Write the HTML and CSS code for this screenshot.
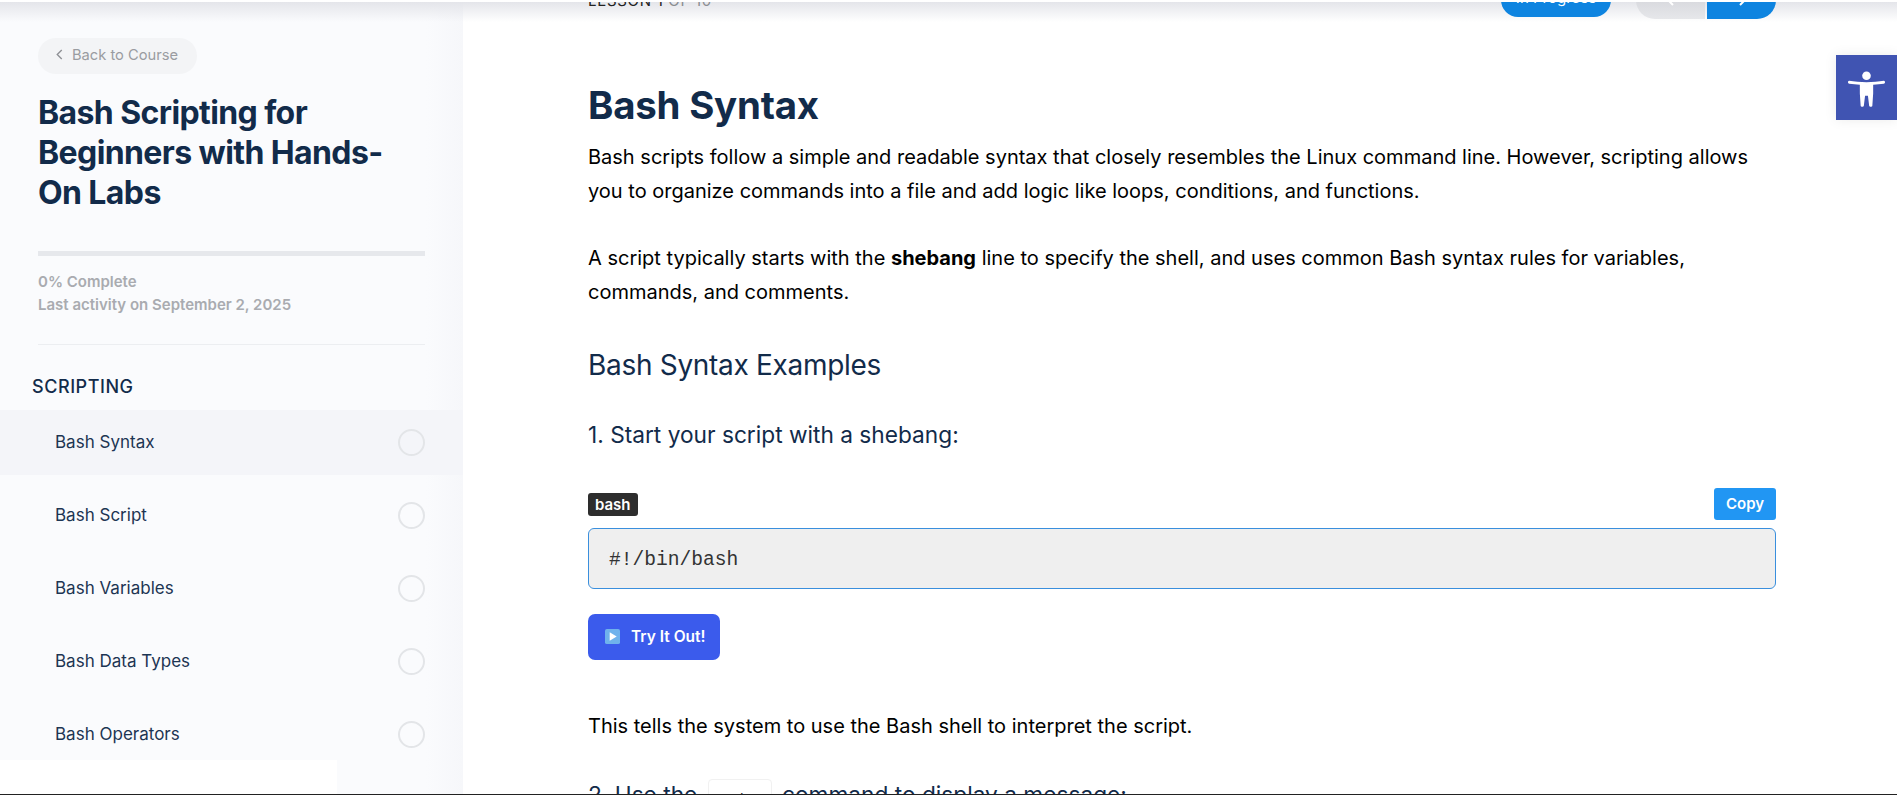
FILE: index.html
```html
<!DOCTYPE html>
<html lang="en">
<head>
<meta charset="utf-8">
<title>Bash Syntax</title>
<link rel="stylesheet" href="styles.css">
</head>
<body>
<div class="page">
  <aside class="sidebar">
    <a class="back"><svg class="back-icon" viewBox="0 0 10 14"><path d="M7.500 2 2.500 7l5 5"/></svg>Back to Course</a>
    <h2 class="course-title">Bash Scripting for Beginners with Hands-On Labs</h2>
    <div class="progress"></div>
    <p class="meta">0% Complete<br>Last activity on September 2, 2025</p>
    <hr class="divider">
    <h3 class="section">SCRIPTING</h3>
    <ul class="lessons">
      <li class="lesson active"><span>Bash Syntax</span><i class="check"></i></li>
      <li class="lesson"><span>Bash Script</span><i class="check"></i></li>
      <li class="lesson"><span>Bash Variables</span><i class="check"></i></li>
      <li class="lesson"><span>Bash Data Types</span><i class="check"></i></li>
      <li class="lesson"><span>Bash Operators</span><i class="check"></i></li>
    </ul>
  </aside>
  <main class="main">
    <header class="topbar">
      <span class="count">LESSON 1 <em>OF 10</em></span>
      <div class="top-actions">
        <span class="status">In Progress</span>
        <div class="nav">
          <a class="nav-btn prev"><svg viewBox="0 0 10 14"><path d="M7 2 2 7l5 5"/></svg></a>
          <a class="nav-btn next"><svg viewBox="0 0 10 14"><path d="m3 2 5 5-5 5"/></svg></a>
        </div>
      </div>
    </header>
    <article class="article">
      <h1>Bash Syntax</h1>
      <p>Bash scripts follow a simple and readable syntax that closely resembles the Linux command line. However, scripting allows you to organize commands into a file and add logic like loops, conditions, and functions.</p>
      <p class="gap">A script typically starts with the <strong>shebang</strong> line to specify the shell, and uses common Bash syntax rules for variables, commands, and comments.</p>
      <h2>Bash Syntax Examples</h2>
      <h3>1. Start your script with a shebang:</h3>
      <div class="code-head"><span class="lang">bash</span><button class="copy">Copy</button></div>
      <pre class="code">#!/bin/bash</pre>
      <button class="try"><svg class="play" viewBox="0 0 16 16"><rect width="16" height="16" rx="2"/><path d="M5 3.500v9l7.500-4.500z"/></svg>Try It Out!</button>
      <p class="after">This tells the system to use the Bash shell to interpret the script.</p>
      <h3 class="second">2. Use the <code class="inline">echo</code> command to display a message:</h3>
    </article>
  </main>
</div>
<div class="top-edge"></div>
<div class="corner"></div>
<div class="bottom-line"></div>
<a class="a11y"><svg viewBox="0 0 40 40"><circle cx="20" cy="8.500" r="4.200"/><path d="M3 13.500c-1.500.3-1.500 2.700.2 2.800l10.300 1v8.500l.8 12c.1 1.300 2.900 1.300 3.100 0l1.200-9.800h2.800l1.200 9.800c.2 1.300 3 1.300 3.100 0l.8-12v-8.500l10.300-1c1.700-.1 1.700-2.500.2-2.800-5 .9-11 1.300-17 1.300s-12-.4-17-1.300z"/></svg></a>
</body>
</html>
```

FILE: styles.css
```css
* { box-sizing: border-box; }
html, body { margin: 0; height: 795px; overflow: hidden; background: #fff; }
body { font-family: Inter, "Liberation Sans", sans-serif; color: #000; }
.page { display: flex; height: 795px; overflow: hidden; }

.sidebar {
  flex: 0 0 463px;
  padding: 38px 38px 0;
  background: linear-gradient(to bottom, #e4e5ea 2px, rgba(250,251,253,0) 22px), linear-gradient(to right, #fafbfd 92%, #f6f7fa 100%);
}
.back {
  display: inline-flex; align-items: center; gap: 8px;
  height: 36px; padding: 0 19px 1px 17px; border-radius: 18px;
  background: #f3f4f6; color: #9a9ca1; font-size: 14.700px; line-height: 1;
}
.back-icon { width: 9px; height: 13px; margin-top: -2px; fill: none; stroke: #8e9095; stroke-width: 1.500; }
.course-title {
  margin: 19px 0 0; width: 360px;
  color: #122b4a; font-size: 32px; line-height: 40px; font-weight: 700; letter-spacing: -0.6px;
}
.progress { height: 5px; margin-top: 38px; background: #e6e8ec; }
.meta { margin: 14px 0 0; color: #a9abb0; font-size: 15px; line-height: 23px; font-weight: 600; }
.divider { margin: 28px 0 0; border: 0; border-top: 1px solid #eceef1; }
.section {
  margin: 32px 0 0 -6px; color: #122b4a;
  font-size: 18px; line-height: 20px; font-weight: 500; letter-spacing: .55px;
}
.lessons { list-style: none; margin: 13px -38px 0; padding: 0; }
.lesson {
  display: flex; align-items: center; justify-content: space-between;
  height: 73px; padding: 0 38px 0 55px;
  color: #1d3553; font-size: 17px;
}
.lesson.active { height: 65px; background: #f4f5f9; margin-bottom: 4px; }
.lesson span { margin-top: -1px; }
.check { width: 27px; height: 27px; border: 2px solid #e3e5e8; border-radius: 50%; }

.main {
  flex: 1; padding: 0 121px 0 125px;
  background: linear-gradient(to bottom, #e4e5ea 2px, rgba(255,255,255,0) 22px);
}
.topbar {
  display: flex; justify-content: space-between; align-items: flex-end;
  height: 19px; overflow: hidden;
}
.count { position: relative; top: -9px; font-size: 15px; line-height: 18px; letter-spacing: .7px; color: #222; }
.count em { font-style: normal; color: #8b8d92; }
.top-actions { display: flex; align-items: flex-end; gap: 25px; }
.status {
  display: flex; align-items: flex-end; justify-content: center;
  width: 110px; height: 34px; margin-bottom: 2px; padding-bottom: 10px;
  border-radius: 0 0 17px 17px; background: #0e84e0; color: #fff; font-size: 15px; line-height: 18px;
}
.nav { display: flex; gap: 2px; }
.nav-btn {
  display: flex; justify-content: center; align-items: flex-end;
  width: 69px; height: 19px; padding-bottom: 12px;
}
.nav-btn svg { width: 10px; height: 14px; flex: none; fill: none; stroke: #fff; stroke-width: 2; }
.prev { background: linear-gradient(to bottom, #d8d9de, #e6e7ea); border-radius: 0 0 0 19px; }
.next { background: #0e84e0; border-radius: 0 0 19px 0; }

.article { padding-top: 64px; }
h1 { margin: 0 0 14px; color: #122b4a; font-size: 38.400px; line-height: 44px; font-weight: 700; letter-spacing: -0.2px; }
.article p { margin: 0; font-size: 20px; line-height: 33.500px; }
.article p.gap { margin-top: 34px; }
.article h2 { margin: 36px 0 0; color: #122b4a; font-size: 28px; line-height: 40px; font-weight: 400; letter-spacing: -0.3px; }
.article h3 { margin: 30px 0 0; color: #122b4a; font-size: 22.700px; line-height: 40px; font-weight: 400; }
.code-head { display: flex; justify-content: space-between; align-items: center; margin-top: 33px; height: 32px; }
.lang { padding: 0 7px; height: 23px; border-radius: 3px; background: #2d2d2d; color: #fff; font-size: 15px; line-height: 23px; font-weight: 600; }
.copy {
  width: 62px; height: 32px; padding: 0 0 2px; border: 0; border-radius: 3px;
  background: #2196f3; color: #fff; font: 600 15px Inter, sans-serif;
}
.code {
  margin: 8px 0 0; height: 61px; padding: 2px 20px 0;
  border: 1px solid #3a8fdd; border-radius: 6px; background: #efefef;
  color: #333; font: 19.600px/59px "Liberation Mono", monospace;
}
.try {
  display: flex; align-items: center; gap: 11px;
  width: 132px; height: 46px; margin-top: 25px; padding: 0 0 2px 17px;
  border: 0; border-radius: 7px; background: #3b5bec; color: #fff;
  font: 600 15.500px Inter, sans-serif;
}
.play { width: 15px; height: 15px; flex: none; }
.play rect { fill: #6fb2ec; }
.play path { fill: #fff; }
.article p.after { margin-top: 50px; }
.article h3.second { margin-top: 31px; }
.inline {
  display: inline-block; width: 64px; height: 34px; margin: 0 4px;
  border: 1px solid #f1f1f1; border-radius: 4px; text-align: center;
  font: 15px/42px "Liberation Mono", monospace; color: #333; vertical-align: middle;
}

.top-edge { position: absolute; left: 0; top: 0; width: 100%; height: 2px; background: #fff; }
.corner { position: absolute; left: 0; top: 760px; width: 337px; height: 34px; background: #fff; }
.bottom-line { position: absolute; left: 0; top: 794px; width: 100%; height: 1px; background: #222; }
.a11y {
  position: absolute; left: 1836px; top: 55px; width: 61px; height: 65px;
  display: flex; align-items: center; justify-content: center;
  background: #4054b2; box-shadow: 0 0 12px rgba(0,0,0,.08);
}
.a11y svg { width: 41px; height: 41px; fill: #fff; }
```
